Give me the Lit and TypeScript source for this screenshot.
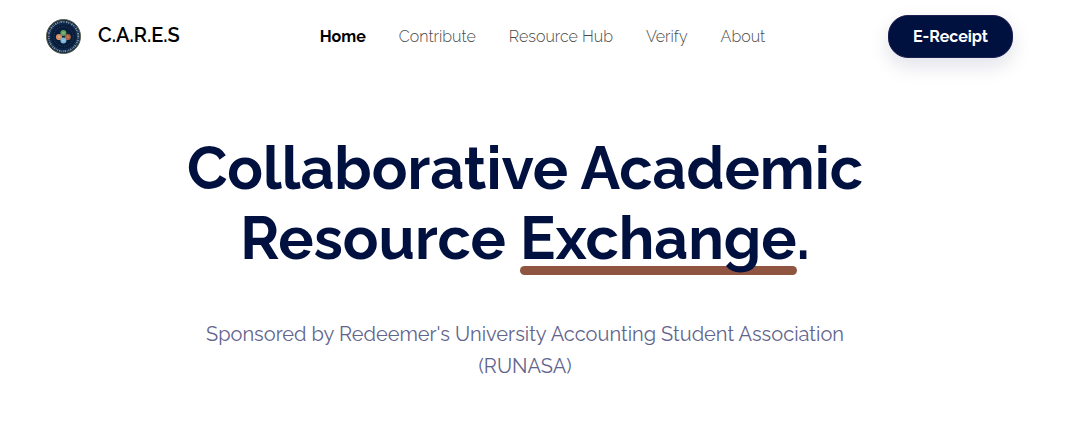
import { LitElement, html, css, svg } from "lit";
import { customElement } from "lit/decorators.js";

@customElement("cares-seal")
export class CaresSeal extends LitElement {
  static styles = css`
    :host { display: block; width: 36px; height: 36px; }
    svg { display: block; width: 100%; height: 100%; }
  `;

  render() {
    return html`<svg viewBox="0 0 36 36" role="img" aria-label="C.A.R.E.S seal">
      ${svg`
        <circle cx="17.5" cy="17.5" r="17" fill="#0b2140" stroke="#59604f" stroke-width="1"/>
        <circle cx="17.5" cy="17.5" r="14.8" fill="none" stroke="#7d909f" stroke-width="2" stroke-dasharray="1.1 .8 .6 .9 1.5 .8"/>
        <circle cx="17.5" cy="17.5" r="12.8" fill="#081c3c" stroke="#13335a" stroke-width=".7"/>
        <circle cx="17.5" cy="17.5" r="9.8" fill="none" stroke="#4d6278" stroke-width=".7" stroke-dasharray=".8 1.5"/>
        <circle cx="17.4" cy="14" r="3" fill="#5ba35c"/>
        <circle cx="13" cy="18" r="3.1" fill="#d28e65"/>
        <circle cx="21.8" cy="18" r="3.1" fill="#a9603f"/>
        <circle cx="17.4" cy="21.6" r="3" fill="#79b9da"/>
        <path d="M16 14h2.8M11.8 18h2.4M20.6 18h2.4M16.2 21.6h2.4" stroke="#dbe3d1" stroke-width=".5"/>
      `}
    </svg>`;
  }
}

@customElement("app-root")
export class AppRoot extends LitElement {
  static styles = css`
    :host {
      display: block;
      min-height: 100vh;
      background: #fff;
      color: #00103f;
      font-family: Raleway, Lato, sans-serif;
      font-size: 16px;
    }
    .header {
      display: grid;
      grid-template-columns: 1fr auto 1fr;
      align-items: center;
      padding: 15px 67px 0 46px;
    }
    .brand {
      display: flex;
      align-items: flex-start;
      gap: 16px;
      color: #000;
      font-size: 20px;
      font-weight: 600;
      line-height: 32px;
      text-decoration: none;
    }
    .nav { display: flex; gap: 33px; padding-left: 26px; }
    .link {
      color: #4b4b4b;
      font-weight: 300;
      line-height: 24px;
      text-decoration: none;
    }
    .current { color: #000; font-weight: 700; }
    .receipt {
      justify-self: end;
      padding: 9px 24px;
      border: 1px solid #1c1f52;
      border-radius: 20px;
      background: #00103f;
      box-shadow: 0 8px 20px rgba(0, 16, 63, 0.12);
      color: #fff;
      font: inherit;
      font-weight: 700;
      line-height: 23px;
      cursor: pointer;
    }
    .hero {
      max-width: 700px;
      margin: 0 auto;
      padding: 76px 30px 40px 0;
      text-align: center;
    }
    .title {
      margin: 0;
      font-size: 59px;
      font-weight: 700;
      line-height: 70px;
    }
    .marked { position: relative; isolation: isolate; }
    .marked::after {
      content: "";
      position: absolute;
      z-index: -1;
      inset: auto 0 -2px;
      height: 9px;
      border-radius: 5px;
      background: #8f5541;
    }
    .sponsor {
      margin: 44px 0 0;
      color: #62648c;
      font-size: 20px;
      font-weight: 400;
      line-height: 32px;
    }
  `;

  render() {
    const links = ["Home", "Contribute", "Resource Hub", "Verify", "About"];
    return html`
      <header class="header">
        <a class="brand" href="#home"><cares-seal></cares-seal><span>C.A.R.E.S</span></a>
        <nav class="nav" aria-label="Main">
          ${links.map((label, i) => html`<a class="link ${i === 0 ? "current" : ""}" href="#${label.toLowerCase().replace(" ", "-")}">${label}</a>`)}
        </nav>
        <button class="receipt" type="button">E-Receipt</button>
      </header>
      <main class="hero">
        <h1 class="title"><span>Collaborative Academic</span> <span>Resource</span> <span class="marked">Exchange</span>.</h1>
        <p class="sponsor">Sponsored by Redeemer's University Accounting Student Association (RUNASA)</p>
      </main>
    `;
  }
}
